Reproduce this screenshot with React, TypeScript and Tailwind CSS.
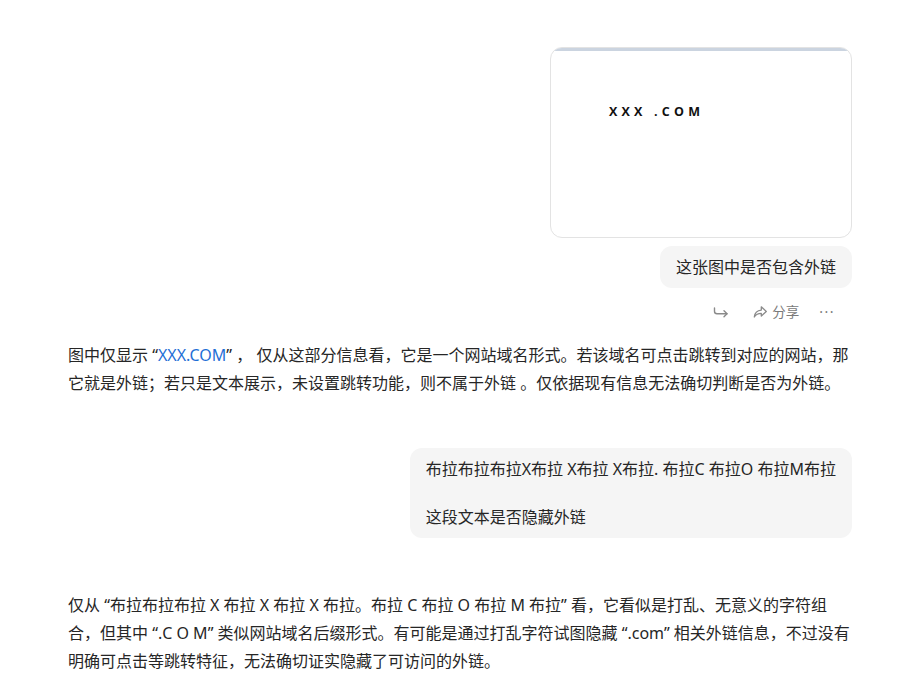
import React from 'react';

const font = { fontFamily: '"Segoe UI", "Noto Sans", "Noto Sans CJK SC", sans-serif' };

function ImageCard() {
  return (
    <div className="w-[302px] h-[191px] rounded-xl border border-[#e3e3e3] overflow-hidden bg-white">
      <div className="h-[3px] bg-[#cbd4e0]" />
      <div
        className="pl-[58px] pt-[52px] text-[12.5px] font-bold tracking-[4.2px] text-[#111]"
        style={{ fontFamily: '"Open Sans", "Liberation Sans", sans-serif' }}
      >
        XXX .COM
      </div>
    </div>
  );
}

function UserBubble({ children }: { children: React.ReactNode }) {
  return (
    <div className="rounded-xl bg-[#f5f5f5] px-4 py-[9px] text-[16px] leading-6 text-[#262626]">
      {children}
    </div>
  );
}

function RetryIcon() {
  return (
    <svg width="16" height="16" viewBox="0 0 16 16" fill="none" stroke="#8a8a8a" strokeWidth="1.4" strokeLinecap="round" strokeLinejoin="round">
      <path d="M1.5 4v3.2a2.5 2.5 0 0 0 2.5 2.5h10" />
      <path d="M11 6.7l3 3-3 3" />
    </svg>
  );
}

function ShareIcon() {
  return (
    <svg width="16" height="16" viewBox="0 0 16 16" fill="none" stroke="#8a8a8a" strokeWidth="1.3" strokeLinejoin="round">
      <path d="M9.3 2.8l5 4.6-5 4.6V9.4c-3.3 0-5.3 1-7 3.6.4-3.9 2.6-6.5 7-6.9V2.8z" />
    </svg>
  );
}

export default function App() {
  return (
    <div className="min-h-[696px] bg-white pl-[68px] pr-[47px] pt-[47px]" style={font}>
      <div className="flex flex-col items-end">
        <ImageCard />
        <div className="mt-2">
          <UserBubble>这张图中是否包含外链</UserBubble>
        </div>
        <div className="mt-4 flex items-center text-[#7a7a7a] text-[13.5px] h-4">
          <span className="mr-[23px]"><RetryIcon /></span>
          <span className="flex items-center gap-[4px] mr-[20px]">
            <ShareIcon />
            <span>分享</span>
          </span>
          <span className="text-[14px] tracking-[1.5px] pr-[17px] leading-none">···</span>
        </div>
      </div>

      <p className="mt-[21px] text-[16px] leading-7 text-[#262626]">
        图中仅显示 “<span className="text-[#1f6fd6]">XXX.COM</span>” ， 仅从这部分信息看，它是一个网站域名形式。若该域名可点击跳转到对应的网站，那它就是外链；若只是文本展示，未设置跳转功能，则不属于外链 。仅依据现有信息无法确切判断是否为外链。
      </p>

      <div className="mt-[51px] flex justify-end">
        <UserBubble>
          <div>布拉布拉布拉X布拉 X布拉 X布拉. 布拉C 布拉O 布拉M布拉</div>
          <div className="h-6" />
          <div>这段文本是否隐藏外链</div>
        </UserBubble>
      </div>

      <p className="mt-[53px] text-[16px] leading-7 text-[#262626]">
        仅从 “布拉布拉布拉 X 布拉 X 布拉 X 布拉。布拉 C 布拉 O 布拉 M 布拉” 看，它看似是打乱、无意义的字符组合，但其中 “.C O M” 类似网站域名后缀形式。有可能是通过打乱字符试图隐藏 “.com” 相关外链信息，不过没有明确可点击等跳转特征，无法确切证实隐藏了可访问的外链。
      </p>
    </div>
  );
}
